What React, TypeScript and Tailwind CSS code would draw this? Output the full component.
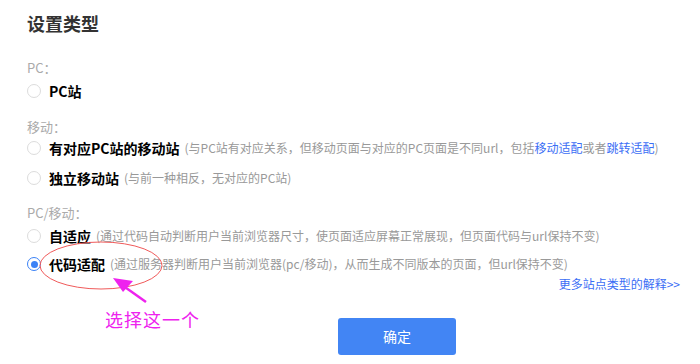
import React from 'react';

const font = { fontFamily: '"Noto Sans CJK SC", "Noto Sans", sans-serif' };

function Radio({ checked = false }: { checked?: boolean }) {
  return checked ? (
    <span className="flex h-[14px] w-[14px] shrink-0 items-center justify-center rounded-full border border-[#3b82f6]">
      <span className="h-[7px] w-[7px] rounded-full bg-[#3b82f6]" />
    </span>
  ) : (
    <span className="h-[14px] w-[14px] shrink-0 rounded-full border border-[#dcdcdc] bg-white" />
  );
}

interface OptionProps {
  title: string;
  note?: React.ReactNode;
  checked?: boolean;
  className?: string;
}

function Option({ title, note, checked, className }: OptionProps) {
  return (
    <div className={`flex h-[20px] items-center ${className ?? ''}`}>
      <Radio checked={checked} />
      <span className="ml-[8px] text-[14px] font-bold text-black">{title}</span>
      {note && <span className="ml-[5px] text-[12px] text-[#999]">{note}</span>}
    </div>
  );
}

function Label({ children, className }: { children: React.ReactNode; className?: string }) {
  return <div className={`h-[20px] text-[13px] leading-[20px] text-[#aaa] ${className ?? ''}`}>{children}</div>;
}

export default function App() {
  return (
    <div className="relative h-[364px] w-[700px] overflow-hidden bg-white" style={font}>
      <div className="flex flex-col pl-[27px] pr-[20px]">
        <h1 className="mt-[11px] text-[18px] font-bold leading-[24px] text-[#333]">设置类型</h1>

        <Label className="mt-[23px]">PC：</Label>
        <Option className="mt-[3px]" title="PC站" />

        <Label className="mt-[16px]">移动：</Label>
        <Option
          className="mt-[1px]"
          title="有对应PC站的移动站"
          note={
            <>
              (与PC站有对应关系，但移动页面与对应的PC页面是不同url，包括
              <span className="text-[#3b6ef5]">移动适配</span>或者
              <span className="text-[#3b6ef5]">跳转适配</span>)
            </>
          }
        />
        <Option className="mt-[10px]" title="独立移动站" note="(与前一种相反，无对应的PC站)" />

        <Label className="mt-[15px]">PC/移动：</Label>
        <Option
          className="mt-[3px]"
          title="自适应"
          note="(通过代码自动判断用户当前浏览器尺寸，使页面适应屏幕正常展现，但页面代码与url保持不变)"
        />
        <Option
          className="mt-[8px]"
          title="代码适配"
          checked
          note="(通过服务器判断用户当前浏览器(pc/移动)，从而生成不同版本的页面，但url保持不变)"
        />

        <div className="flex h-[20px] justify-end">
          <a className="text-[12px] leading-[20px] text-[#3b6ef5]">更多站点类型的解释&gt;&gt;</a>
        </div>

        <button className="ml-[311px] mt-[24px] h-[37px] w-[118px] rounded-[3px] bg-[#4285f4] text-[14px] text-white">
          确定
        </button>
      </div>

      {/* annotation overlay */}
      <svg className="pointer-events-none absolute left-0 top-0" width="700" height="364">
        <ellipse cx="101" cy="265.5" rx="61" ry="23.5" fill="none" stroke="#f05a5a" strokeWidth="1" />
        <line x1="146" y1="302" x2="122" y2="285" stroke="#ee22ee" strokeWidth="2.5" />
        <polygon points="113,278 133,281 123,292" fill="#ee22ee" />
      </svg>
      <div className="absolute left-[105px] top-[307px] text-[18px] leading-[24px] tracking-[1px] text-[#ee22ee]">
        选择这一个
      </div>
    </div>
  );
}
